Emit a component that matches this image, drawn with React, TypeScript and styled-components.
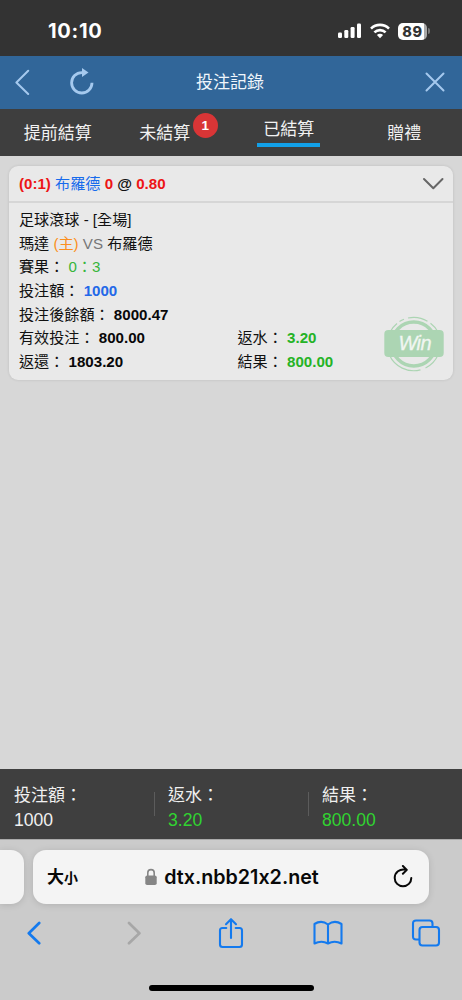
import React from 'react';
import styled, { createGlobalStyle } from 'styled-components';

const GlobalStyle = createGlobalStyle`
  * { box-sizing: border-box; }
  body {
    margin: 0;
    background: #d7d7d7;
    font-family: "Liberation Sans", "Noto Sans CJK TC", sans-serif;
  }
  svg { display: block; flex: none; }
`;

const Screen = styled.div`
  width: 462px;
  height: 1000px;
  display: flex;
  flex-direction: column;
  overflow: hidden;
`;

const StatusBar = styled.header`
  height: 56px;
  flex: none;
  padding: 6px 32px 0 48px;
  display: flex;
  align-items: center;
  justify-content: space-between;
  background: #333;
  color: #fff;
`;

const Clock = styled.span`
  font: 700 20px/24px Inter, sans-serif;
  letter-spacing: 0.7px;
`;

const StatusIcons = styled.div`
  display: flex;
  align-items: center;
`;

const Battery = styled.div`
  width: 29px;
  height: 17px;
  margin-left: 8px;
  border-radius: 5px;
  background: linear-gradient(90deg, #fff 26px, #aaa 26px);
  color: #333;
  font: 800 14.5px/17px Inter, sans-serif;
  letter-spacing: 0.6px;
  text-align: center;
`;

const BatteryTip = styled.div`
  width: 2px;
  height: 6px;
  margin-left: 1px;
  border-radius: 0 2px 2px 0;
  background: #777;
`;

const NavBar = styled.nav`
  height: 53px;
  flex: none;
  padding: 0 17px 0 15px;
  display: grid;
  grid-template-columns: 80px 1fr 80px;
  align-items: center;
  background: #316699;
`;

const NavActions = styled.div<{ $end?: boolean }>`
  display: flex;
  align-items: center;
  gap: 39px;
  padding-bottom: 2px;
  justify-content: ${(p) => (p.$end ? 'flex-end' : 'flex-start')};
`;

const Title = styled.h1`
  margin: 0;
  color: #f0f6fc;
  font-size: 17px;
  font-weight: 400;
  line-height: 24px;
  text-align: center;
`;

const Tabs = styled.div`
  height: 47px;
  flex: none;
  display: grid;
  grid-template-columns: repeat(4, 1fr);
  justify-items: center;
  background: #3e3e3e;
`;

const Tab = styled.div<{ $active?: boolean; $badged?: boolean }>`
  position: relative;
  height: ${(p) => (p.$active ? '38px' : '47px')};
  padding: ${(p) => (p.$active ? '9px 6px 0' : p.$badged ? '13px 17px 0 0' : '13px 0 0')};
  border-bottom: ${(p) => (p.$active ? '4px solid #12a0e8' : '0')};
  color: #f2f2f2;
  font-size: 17px;
  line-height: 24px;
`;

const Badge = styled.span`
  position: absolute;
  top: 4px;
  right: -10.5px;
  width: 25px;
  height: 25px;
  border-radius: 50%;
  background: #d93536;
  color: #fff;
  font-size: 13.5px;
  font-weight: 700;
  line-height: 25px;
  text-align: center;
`;

const Content = styled.main`
  flex: 1;
  padding: 10px 9px 0;
  background: #d7d7d7;
`;

const Card = styled.section`
  height: 214px;
  border-radius: 9px;
  background: #e9e9e9;
  box-shadow: 0 0 3px rgba(0, 0, 0, 0.12);
`;

const CardHeader = styled.div`
  height: 37px;
  padding: 0 9px 0 10px;
  display: flex;
  align-items: center;
  justify-content: space-between;
  border-bottom: 2px solid #d6d6d6;
  font-size: 15.12px;
  line-height: 23px;
  white-space: pre;
`;

const CardBody = styled.div`
  padding: 5px 9px 0 10px;
  display: grid;
  grid-template-columns: 218.5px 1fr 60px;
  grid-auto-rows: 23.7px;
  color: #111;
  font-size: 15.12px;
  line-height: 23.7px;
  white-space: pre;
`;

const Line = styled.div<{ $wide?: boolean }>`
  grid-column: ${(p) => (p.$wide ? '1 / -1' : 'auto')};
`;

const Tint = styled.span<{ $color: string; $bold?: boolean }>`
  color: ${(p) => p.$color};
  font-weight: ${(p) => (p.$bold ? 700 : 400)};
`;

const Stamp = styled.div`
  grid-column: 3;
  grid-row: 6 / span 2;
  height: 56px;
  margin: -10px 0 0 -0.5px;
`;

const Totals = styled.footer`
  height: 70px;
  flex: none;
  display: grid;
  grid-template-columns: repeat(3, 1fr);
  background: #3f3f3f;
`;

const Total = styled.div<{ $divided?: boolean }>`
  display: flex;
  align-items: center;
  gap: 13px;
  padding-left: ${(p) => (p.$divided ? '0' : '14px')};

  &::before {
    content: ${(p) => (p.$divided ? "''" : 'none')};
    width: 1px;
    height: 24px;
    background: #5c5c5c;
  }
`;

const TotalText = styled.div<{ $color: string }>`
  padding-top: 7px;
  color: #f0f0f0;
  font-size: 17px;
  line-height: 24px;

  strong {
    display: block;
    color: ${(p) => p.$color};
    font-size: 17.6px;
    font-weight: 400;
  }
`;

const Browser = styled.div`
  height: 161px;
  flex: none;
  padding-top: 11px;
  display: flex;
  flex-direction: column;
  border-top: 1px solid #aaa;
  background: #cbcbcb;
`;

const AddressRow = styled.div`
  height: 54px;
  margin-top: -1px;
  display: flex;
  gap: 9.5px;
`;

const PreviousPage = styled.div`
  width: 23.5px;
  border-radius: 0 13px 13px 0;
  background: #f3f3f3;
  box-shadow: 0 1px 7px rgba(0, 0, 0, 0.13);
`;

const AddressBar = styled.div`
  width: 396px;
  padding: 0 16px 0 14px;
  display: grid;
  grid-template-columns: 70px 1fr 66px;
  align-items: center;
  border-radius: 13px;
  background: #f4f4f4;
  box-shadow: 0 1px 7px rgba(0, 0, 0, 0.13);
  color: #080808;

  & > svg { justify-self: end; }
`;

const TextSize = styled.div`
  padding-top: 2px;
  font-size: 17px;
  font-weight: 700;
  line-height: 24px;

  small { font-size: 14px; }
`;

const Url = styled.div`
  display: flex;
  align-items: center;
  justify-content: center;
  gap: 7px;
  font: 600 19.7px/26px Inter, sans-serif;
  font-feature-settings: "calt" 0;
`;

const Toolbar = styled.div`
  height: 58px;
  padding-left: 34px;
  display: grid;
  grid-template-columns: 100px 96.5px 97.5px 98px 0;
  align-items: center;

  & > svg { transform: translateX(-50%); }
`;

const HomeIndicator = styled.div`
  width: 165px;
  height: 6px;
  margin: 22.5px auto 0;
  border-radius: 3px;
  background: #000;
`;

const stroke = (color: string, width: number) => ({
  fill: 'none',
  stroke: color,
  strokeWidth: width,
  strokeLinecap: 'round' as const,
  strokeLinejoin: 'round' as const,
});

const Signal = () => (
  <svg width="24" height="16" viewBox="0 0 24 16" fill="#fff">
    <rect x="0" y="9.5" width="4" height="5.5" rx="1.2" />
    <rect x="6.3" y="7" width="4" height="8" rx="1.2" />
    <rect x="12.6" y="4" width="4" height="11" rx="1.2" />
    <rect x="19" y="0.5" width="4" height="14.5" rx="1.2" />
  </svg>
);

const Wifi = () => (
  <svg width="20" height="16" viewBox="0 0 20 16" fill="none" stroke="#fff" strokeWidth="2.6" style={{ marginLeft: 8 }}>
    <path d="M1 5.6a12.8 12.8 0 0 1 18 0" />
    <path d="M4.4 9.4a8 8 0 0 1 11.2 0" />
    <path d="M10 15.2L6.9 12.1a4.4 4.4 0 0 1 6.2 0z" fill="#fff" stroke="none" />
  </svg>
);

const WinStamp = () => (
  <svg width="60" height="56" viewBox="0 0 60 56">
    <g fill="none" stroke="#acd5b3">
      <circle cx="29.8" cy="28" r="22" strokeWidth="3.5" />
      <path d="M15.5 5.6A26.6 26.6 0 0 1 20 3.2M24 2A26.6 26.6 0 0 1 43.5 5.2M46.5 7.2A26.6 26.6 0 0 1 54 16M5.8 16.5A26.6 26.6 0 0 1 13 7.5M5.4 39A26.6 26.6 0 0 0 36.5 53.8M41.5 52A26.6 26.6 0 0 0 54 39" strokeWidth="1.2" />
    </g>
    <rect x="0.3" y="14" width="59.4" height="27" rx="4" fill="#acd5b3" />
    <text x="31" y="34.2" textAnchor="middle" textLength="33" fill="#f1f6f1" stroke="#f1f6f1" strokeWidth="0.3" fontFamily="Liberation Sans, sans-serif" fontSize="20" fontStyle="italic">Win</text>
  </svg>
);

export default function App() {
  return (
    <Screen>
      <GlobalStyle />
      <StatusBar>
        <Clock>10:10</Clock>
        <StatusIcons>
          <Signal />
          <Wifi />
          <Battery>89</Battery>
          <BatteryTip />
        </StatusIcons>
      </StatusBar>

      <NavBar>
        <NavActions>
          <svg width="16" height="26" viewBox="0 0 16 26" {...stroke('#a5c9ee', 2)}>
            <path d="M13.2 1.8L1.4 13.5L13.2 25" />
          </svg>
          <svg width="24" height="28" viewBox="0 0 24 28" fill="none" stroke="#a5c9ee" strokeWidth="2.8">
            <path d="M14 4.6H11.8A10.2 10.2 0 1 0 22 14.8" />
            <path d="M12 0L18.5 4.5L12 9z" fill="#a5c9ee" stroke="none" />
          </svg>
        </NavActions>
        <Title>投注記錄</Title>
        <NavActions $end>
          <svg width="20" height="20" viewBox="0 0 20 20" {...stroke('#a5c9ee', 2)}>
            <path d="M1.5 1.5L18.5 18.5M18.5 1.5L1.5 18.5" />
          </svg>
        </NavActions>
      </NavBar>

      <Tabs>
        <Tab>提前結算</Tab>
        <Tab $badged>
          未結算<Badge>1</Badge>
        </Tab>
        <Tab $active>已結算</Tab>
        <Tab>贈禮</Tab>
      </Tabs>

      <Content>
        <Card>
          <CardHeader>
            <div>
              <Tint $color="#ed1515" $bold>(0:1) </Tint>
              <Tint $color="#176bec">布羅德 </Tint>
              <Tint $color="#ed1515" $bold>0 </Tint>
              <Tint $color="#111" $bold>@ </Tint>
              <Tint $color="#ed1515" $bold>0.80</Tint>
            </div>
            <svg width="22" height="14" viewBox="0 0 22 14" {...stroke('#666', 2)}>
              <path d="M2 2L11.3 11.3L20.5 2" />
            </svg>
          </CardHeader>
          <CardBody>
            <Line $wide>足球滾球 - [全場]</Line>
            <Line $wide>
              瑪達 <Tint $color="#fb8f20">(主)</Tint> <Tint $color="#777">VS</Tint> 布羅德
            </Line>
            <Line $wide>
              賽果： <Tint $color="#37b53b">0：3</Tint>
            </Line>
            <Line $wide>
              投注額： <Tint $color="#2368e8" $bold>1000</Tint>
            </Line>
            <Line $wide>
              投注後餘額： <Tint $color="#080808" $bold>8000.47</Tint>
            </Line>
            <Line>
              有效投注： <Tint $color="#080808" $bold>800.00</Tint>
            </Line>
            <Line>
              返水： <Tint $color="#25b326" $bold>3.20</Tint>
            </Line>
            <Stamp>
              <WinStamp />
            </Stamp>
            <Line>
              返還： <Tint $color="#080808" $bold>1803.20</Tint>
            </Line>
            <Line>
              結果： <Tint $color="#25b326" $bold>800.00</Tint>
            </Line>
          </CardBody>
        </Card>
      </Content>

      <Totals>
        <Total>
          <TotalText $color="#f0f0f0">投注額：<strong>1000</strong></TotalText>
        </Total>
        <Total $divided>
          <TotalText $color="#31d331">返水：<strong>3.20</strong></TotalText>
        </Total>
        <Total $divided>
          <TotalText $color="#31d331">結果：<strong>800.00</strong></TotalText>
        </Total>
      </Totals>

      <Browser>
        <AddressRow>
          <PreviousPage />
          <AddressBar>
            <TextSize>大<small>小</small></TextSize>
            <Url>
              <svg width="12" height="18" viewBox="0 0 12 18">
                <path d="M2.8 8V4.8a3.2 3.2 0 0 1 6.4 0V8" fill="none" stroke="#858585" strokeWidth="1.6" />
                <rect x="0.3" y="7.5" width="11.4" height="9.5" rx="1.8" fill="#858585" />
              </svg>
              dtx.nbb21x2.net
            </Url>
            <svg width="20" height="24" viewBox="0 0 20 24" {...stroke('#080808', 2)}>
              <path d="M13.3 4.9C6.5 3.3 1.7 7.6 1.7 13A8.3 8.3 0 0 0 18.3 13M9.9 1L13.8 4.9L9.9 8.8" />
            </svg>
          </AddressBar>
        </AddressRow>
        <Toolbar>
          <svg width="16" height="24" viewBox="0 0 16 24" {...stroke('#147aee', 2.7)}>
            <path d="M13.2 2L2.8 12.2L13.2 22.2" />
          </svg>
          <svg width="16" height="24" viewBox="0 0 16 24" {...stroke('#a7a7a7', 2.7)}>
            <path d="M3 2L13.4 12.2L3 22.2" />
          </svg>
          <svg width="26" height="32" viewBox="0 0 26 32" {...stroke('#147aee', 2.1)}>
            <path d="M8.3 11H4.5Q2 11 2 13.5V27.5Q2 30 4.5 30H21.5Q24 30 24 27.5V13.5Q24 11 21.5 11H17.7M13 21V2.5M8 7.2L13 2.2L18 7.2" />
          </svg>
          <svg width="30" height="26" viewBox="0 0 30 26" {...stroke('#147aee', 2.1)}>
            <path d="M15 4.5Q8.5-.5 1.5 4V23.5Q8.5 20 15 23.5Q21.5 20 28.5 23.5V4Q21.5-.5 15 4.5V23.5" />
          </svg>
          <svg width="30" height="28" viewBox="0 0 30 28" {...stroke('#147aee', 2.1)}>
            <path d="M8 20.5H5Q2 20.5 2 17.5V4.5Q2 1.5 5 1.5H18.5Q21.5 1.5 21.5 4.5V7.5" />
            <rect x="8.5" y="8" width="19.5" height="18.5" rx="3" />
          </svg>
        </Toolbar>
        <HomeIndicator />
      </Browser>
    </Screen>
  );
}
